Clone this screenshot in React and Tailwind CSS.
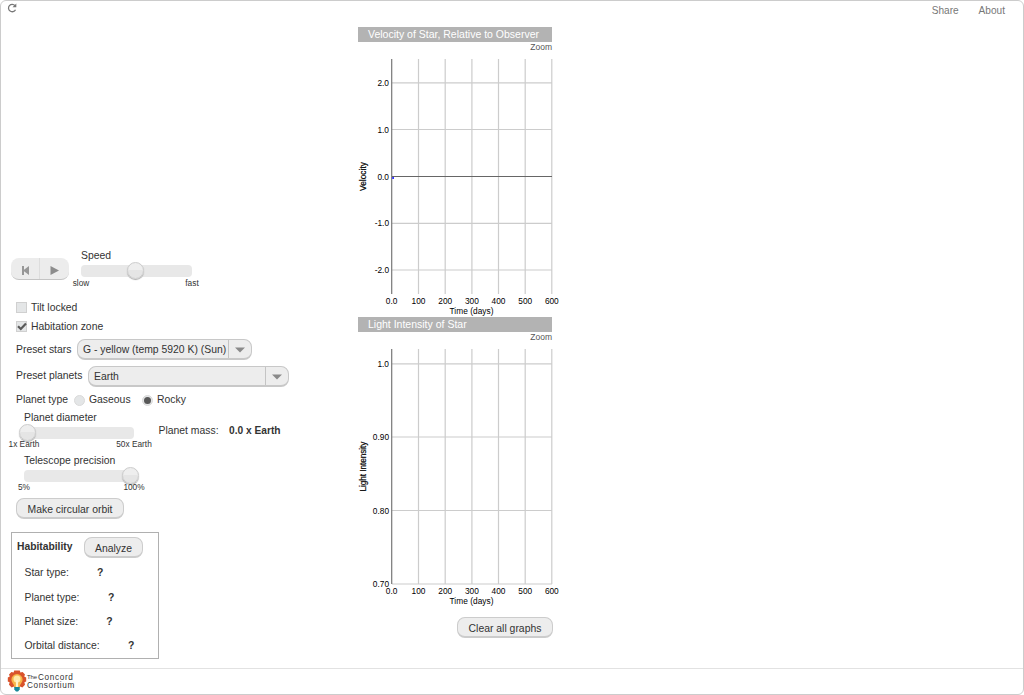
import React from "react";

function Slider({ label, left, right, percent, endsClass, className }) {
  return (
    <div className={`flex flex-col ${className}`}>
      <div className="h-[15px] leading-[16px] whitespace-nowrap">{label}</div>
      <div className="relative mt-0.5 h-[11.5px] rounded-[4px] bg-[#e8e8e8]">
        <span
          className="absolute top-[-3px] -ml-[8.5px] size-[17px] rounded-full border border-[#cccccc] bg-linear-to-b from-[#eeeeee] from-50% to-[#e5e5e5] to-50% shadow-[0_1px_1px_#aaaaaa]"
          style={{ left: `${percent}%` }}
        />
      </div>
      <div className={`relative flex h-[11px] justify-between text-[8.3px] ${endsClass}`}>
        <span className="flex w-0 justify-center whitespace-nowrap">{left}</span>
        <span className="flex w-0 justify-center whitespace-nowrap">{right}</span>
      </div>
    </div>
  );
}

function Select({ value, className }) {
  return (
    <div className={`flex h-[21px] items-stretch rounded-[8px] border border-b-2 border-[#c8c8c8] bg-[#ededed] ${className}`}>
      <span className="flex-1 pl-[5px] leading-[20px] whitespace-nowrap">{value}</span>
      <span className="flex w-[23px] items-center justify-center border-l border-[#c4c4c4]">
        <svg width="10" height="6" viewBox="0 0 10 6" className="mt-0.5">
          <path d="M0 0.5H10L5 5.5Z" fill="#8a8a8a" />
        </svg>
      </span>
    </div>
  );
}

function Button({ children, className }) {
  return (
    <button className={`h-[21px] rounded-[8px] border border-b-2 border-[#cccccc] bg-[#ededed] pt-px text-center leading-[19px] whitespace-nowrap ${className}`}>
      {children}
    </button>
  );
}

function Checkbox({ label, checked }) {
  return (
    <div className="flex h-[19px] items-center gap-[4px]">
      <span className="flex size-[11px] items-center justify-center border border-[#d0d0d0] bg-[#e4e6e7]">
        {checked && (
          <svg width="10" height="9" viewBox="0 0 10 9" className="shrink-0">
            <path d="M1 4.2L3.8 7L9 1.5" fill="none" stroke="#5a5a5a" strokeWidth="2.2" />
          </svg>
        )}
      </span>
      <span>{label}</span>
    </div>
  );
}

function Radio({ label, checked, className }) {
  return (
    <span className={`flex items-center gap-[4px] ${className}`}>
      <span className="flex size-[11px] items-center justify-center rounded-full border border-[#dadada] bg-[#e4e6e7]">
        {checked && <span className="size-[7px] rounded-full bg-[#585858]" />}
      </span>
      {label}
    </span>
  );
}

const columns = [33.6, 60.5, 87.2, 113.9, 140.5, 167.2, 193.8];
const days = ["0.0", "100", "200", "300", "400", "500", "600"];

function Graph({ title, yLabel, yLabelLength, rows, zero }) {
  return (
    <section>
      <h2 className="h-[15px] w-[194px] bg-[#b3b3b3] pl-[10px] text-[10.5px] leading-[15px] text-white">{title}</h2>
      <div className="h-[11px] w-[194px] text-right text-[8.5px] leading-[11px] text-[#555555]">Zoom</div>
      <svg width="206" height="264" viewBox="0 0 206 264" className="block font-['Liberation_Sans',Arial,sans-serif] text-[8.3px]">
        {columns.slice(1).map((x) => (
          <path key={x} d={`M${x} 6V241`} stroke="#cccccc" strokeWidth="1.2" />
        ))}
        {rows.map(([text, y]) => (
          <g key={text}>
            <path d={`M34 ${y}H194`} stroke="#cccccc" strokeWidth="1.2" />
            <text x="31" y={y + 3} textAnchor="end">{text}</text>
          </g>
        ))}
        <path d="M33.7 6V241" stroke="#777777" strokeWidth="1.2" />
        {zero && <path d="M34 123.5H194" stroke="#666666" />}
        {zero && <path d="M34.2 125H36" stroke="#3333ff" strokeWidth="2" />}
        {days.map((d, i) => (
          <text key={d} x={columns[i]} y="251" textAnchor="middle">{d}</text>
        ))}
        <text x="113.5" y="261" textAnchor="middle" textLength="44">Time (days)</text>
        <text transform="translate(8.3 123.5) rotate(-90)" textAnchor="middle" textLength={yLabelLength} stroke="#000000" strokeWidth=".2">{yLabel}</text>
      </svg>
    </section>
  );
}

const facts = [
  ["Star type:", "ml-[28px]", "h-[25px]"],
  ["Planet type:", "ml-[28.5px]", "h-[24px]"],
  ["Planet size:", "ml-[28px]", "h-[24px]"],
  ["Orbital distance:", "ml-[28.5px]", "h-[24px]"],
];

function Controls() {
  return (
    <div className="w-[357px] shrink-0 pt-[228px]">
      <div className="flex h-[42px] pl-[10px]">
        <div className="mt-[10px] flex h-[22px] w-[58px] overflow-hidden rounded-[8px] border-b border-[#c4c4c4] bg-[#ececec]">
          <button className="flex w-[29px] items-center justify-center border-r border-[#dddddd] pt-[3px]">
            <svg width="9" height="9" viewBox="0 0 9 9" fill="#979797">
              <path d="M1 0H3V3.7L8 0V9L3 5.3V9H1Z" />
            </svg>
          </button>
          <button className="flex w-[29px] items-center justify-center pt-[3px]">
            <svg width="9" height="9" viewBox="0 0 9 9" fill="#8c8c8c">
              <path d="M0.5 0L9 4.5L0.5 9Z" />
            </svg>
          </button>
        </div>
        <Slider label="Speed" left="slow" right="fast" percent={49.5} endsClass="leading-[12px]" className="ml-3 w-[111px]" />
      </div>
      <div className="mt-[8px] pl-[15px]">
        <Checkbox label="Tilt locked" />
        <Checkbox label="Habitation zone" checked />
        <div className="mt-[3px] flex h-[21px]">
          <span className="w-[61px] leading-[21px] whitespace-nowrap">Preset stars</span>
          <Select value="G - yellow (temp 5920 K) (Sun)" className="w-[175px]" />
        </div>
        <div className="mt-[6px] flex h-[21px]">
          <span className="w-[72px] leading-[20px] whitespace-nowrap">Preset planets</span>
          <Select value="Earth" className="w-[201px]" />
        </div>
        <div className="mt-[5px] flex h-[16px] items-center">
          <span className="w-[58px] whitespace-nowrap">Planet type</span>
          <Radio label="Gaseous" className="w-[68px]" />
          <Radio label="Rocky" checked className="" />
        </div>
      </div>
      <div className="mt-[2px] flex pl-[23px]">
        <Slider label="Planet diameter" left="1x Earth" right="50x Earth" percent={3} endsClass="leading-[10px]" className="w-[110px]" />
        <span className="mt-[13px] ml-[24.5px] w-[70.5px] leading-[15px] whitespace-nowrap">Planet mass:</span>
        <b className="mt-[13px] text-[10.2px] leading-[15px] whitespace-nowrap">0.0 x Earth</b>
      </div>
      <Slider label="Telescope precision" left="5%" right="100%" percent={97} endsClass="leading-[10px]" className="mt-[3.5px] ml-[23px] w-[110px]" />
      <Button className="mt-[5px] ml-[15px] block w-[108px]">Make circular orbit</Button>
      <div className="mt-[13px] ml-[10px] h-[127px] w-[148px] border border-[#b0b0b0] pt-[4px]">
        <div className="flex h-[21px] items-center pl-[5px]">
          <b className="w-[67px] text-[10.3px]">Habitability</b>
          <Button className="w-[59px]">Analyze</Button>
        </div>
        <div className="mt-[3px] pl-[12.5px]">
          {facts.map(([name, gap, height]) => (
            <div key={name} className={`flex items-center ${height}`}>
              <span>{name}</span>
              <b className={gap}>?</b>
            </div>
          ))}
        </div>
      </div>
    </div>
  );
}

function Logo() {
  return (
    <div className="flex items-center">
      <svg width="20" height="22" viewBox="0 0 20 22" className="mb-px">
        <path d="M7.2 0.5H12.8L13.4 2.5L15.6 2L18 4.6L17.2 6.6L19.2 7.6V11.5L17.4 12.2L18 14.8L15.4 17.4L13 16.6L12 18.6H8L7 16.6L4.6 17.4L2 14.8L2.6 12.2L0.8 11.5V7.6L2.8 6.6L2 4.6L4.4 2L6.6 2.5Z" fill="#d9532b" />
        <path d="M10 4A5.6 5.6 0 0 1 15.6 9.6C15.6 12.6 13 13.8 12.7 17H7.3C7 13.8 4.4 12.6 4.4 9.6A5.6 5.6 0 0 1 10 4Z" fill="#f7b548" />
        <circle cx="10" cy="9" r="3.5" fill="#ffe9a8" />
        <path d="M8.9 10H11.1V17H8.9Z" fill="#fff2c8" />
        <path d="M7.3 17H12.7V19.5L11 21.5H9L7.3 19.5Z" fill="#15889a" />
      </svg>
      <div className="text-[8.2px] leading-[7.5px] text-[#333333]">
        <div className="flex whitespace-nowrap">
          <span className="w-[11px] text-[6px] tracking-[-0.1px]">The</span>
          <span className="tracking-[0.65px]">Concord</span>
        </div>
        <div className="tracking-[0.6px] whitespace-nowrap">Consortium</div>
      </div>
    </div>
  );
}

export default function App() {
  return (
    <div className="flex h-[695px] w-[1024px] flex-col overflow-hidden rounded-[6px] border border-[#cccccc] bg-white font-['Liberation_Sans',Arial,sans-serif] text-[10.4px] leading-[14px] text-[#333333]">
      <header className="flex h-[19px] shrink-0 justify-between pr-[18px] pl-[6px] text-[10.1px] text-[#777777]">
        <svg width="10" height="10" viewBox="0 0 10 10" className="mt-[2px]">
          <path d="M8 2.6A3.7 3.7 0 1 0 8.5 6.7" fill="none" stroke="#777777" strokeWidth="1.3" />
          <path d="M9.3 0.5V4.3H5.5Z" fill="#777777" />
        </svg>
        <nav className="flex gap-[20px] pt-[3px]">
          <span>Share</span>
          <span>About</span>
        </nav>
      </header>
      <main className="flex h-[648px] shrink-0">
        <Controls />
        <div className="w-[206px] pt-[7px]">
          <Graph
            title="Velocity of Star, Relative to Observer"
            yLabel="Velocity"
            yLabelLength="29"
            rows={[["2.0", 29.8], ["1.0", 76.5], ["0.0", 123.5], ["-1.0", 170.3], ["-2.0", 217]]}
            zero
          />
          <Graph
            title="Light Intensity of Star"
            yLabel="Light Intensity"
            yLabelLength="50"
            rows={[["1.0", 20.8], ["0.90", 94], ["0.80", 167.5], ["0.70", 241]]}
          />
          <Button className="mt-[10px] ml-[99px] block w-[96px]">Clear all graphs</Button>
        </div>
      </main>
      <footer className="flex flex-1 items-center border-t border-[#e2e2e2] pl-[6px]">
        <Logo />
      </footer>
    </div>
  );
}
